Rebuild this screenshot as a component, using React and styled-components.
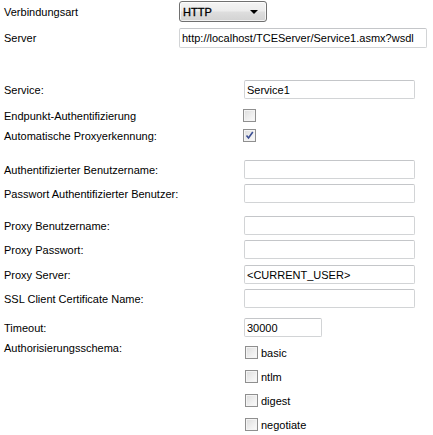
import React from "react";
import styled, { createGlobalStyle } from "styled-components";

const Global = createGlobalStyle`
  html, body { margin: 0; padding: 0; background: #ffffff; }
  body {
    font-family: "Liberation Sans", Arial, sans-serif;
    font-size: 11px;
    color: #000;
  }
`;

const Page = styled.div`
  width: 433px;
  height: 435px;
  padding-top: 1px;
  box-sizing: border-box;
  overflow: hidden;
`;

const Section = styled.div`
  display: flex;
  flex-direction: column;
  margin-top: ${(p) => p.$top || 0}px;
`;

const Row = styled.div`
  display: grid;
  grid-template-columns: ${(p) => p.$labelWidth}px 1fr;
  align-items: ${(p) => (p.$alignTop ? "start" : "center")};
  min-height: ${(p) => p.$height || 19}px;
  margin-top: ${(p) => p.$gap || 0}px;
`;

const Label = styled.div`
  padding-left: 4px;
  line-height: 14px;
  white-space: nowrap;
`;

const TextBox = styled.div`
  box-sizing: border-box;
  width: ${(p) => p.$width}px;
  height: ${(p) => p.$height || 19}px;
  border: 1px solid #d2d4d6;
  border-top-color: #c4c6c9;
  border-radius: 2px;
  background: #fff;
  padding: 0 2px;
  display: flex;
  align-items: center;
  white-space: nowrap;
  overflow: hidden;
  font-size: 11px;
`;

const Select = styled.div`
  box-sizing: border-box;
  width: 88px;
  height: 21px;
  border: 1px solid #707070;
  border-radius: 3px;
  background: linear-gradient(#f4f4f4 0%, #ececec 48%, #dedede 52%, #d2d2d2 100%);
  box-shadow: inset 0 0 0 1px rgba(255, 255, 255, 0.7);
  display: flex;
  align-items: center;
  justify-content: space-between;
  padding: 0 8px 0 3px;
  font-size: 11px;
  -webkit-text-stroke: 0.35px #000;
`;

const Arrow = styled.span`
  width: 0;
  height: 0;
  border-left: 4px solid transparent;
  border-right: 4px solid transparent;
  border-top: 4px solid #000;
`;

const Box = styled.span`
  box-sizing: border-box;
  display: inline-flex;
  align-items: center;
  justify-content: center;
  width: 13px;
  height: 13px;
  margin-left: ${(p) => p.$shift || 0}px;
  border: 1px solid #8f8f8f;
  background: linear-gradient(135deg, #dcdcdc 0%, #f0f0f0 60%, #fbfbfb 100%);
  box-shadow: inset 0 0 0 1px #f4f4f4;
  flex: none;
`;

const CheckList = styled.div`
  display: flex;
  flex-direction: column;
  gap: 5px;
  padding-top: 2px;
`;

const CheckItem = styled.label`
  display: flex;
  align-items: center;
  gap: 3px;
  height: 19px;
  padding-left: 1px;
  font-size: 11px;
`;

function Checkbox({ checked, shift }) {
  return (
    <Box $shift={shift}>
      {checked && (
        <svg width="9" height="9" viewBox="0 0 9 9">
          <path
            d="M1.5 4.5 L3.5 7 L7.8 1"
            fill="none"
            stroke="#3c4f94"
            strokeWidth="1.6"
          />
        </svg>
      )}
    </Box>
  );
}

const LW = 244;

export default function App() {
  return (
    <Page>
      <Global />
      <Section>
        <Row $labelWidth={179} $height={21}>
          <Label>Verbindungsart</Label>
          <Select>
            <span>HTTP</span>
            <Arrow />
          </Select>
        </Row>
        <Row $labelWidth={179} $height={20} $gap={6}>
          <Label>Server</Label>
          <TextBox $width={248} $height={20}>
            http://localhost/TCEServer/Service1.asmx?wsdl
          </TextBox>
        </Row>
      </Section>

      <Section $top={32}>
        <Row $labelWidth={LW}>
          <Label>Service:</Label>
          <TextBox $width={171}>Service1</TextBox>
        </Row>
        <Row $labelWidth={LW} $gap={7}>
          <Label>Endpunkt-Authentifizierung</Label>
          <Checkbox shift={-1} />
        </Row>
        <Row $labelWidth={LW} $gap={1}>
          <Label>Automatische Proxyerkennung:</Label>
          <Checkbox checked shift={-1} />
        </Row>

        <Row $labelWidth={LW} $gap={15}>
          <Label>Authentifizierter Benutzername:</Label>
          <TextBox $width={171} />
        </Row>
        <Row $labelWidth={LW} $gap={5}>
          <Label>Passwort Authentifizierter Benutzer:</Label>
          <TextBox $width={171} />
        </Row>

        <Row $labelWidth={LW} $gap={13}>
          <Label>Proxy Benutzername:</Label>
          <TextBox $width={171} />
        </Row>
        <Row $labelWidth={LW} $gap={5}>
          <Label>Proxy Passwort:</Label>
          <TextBox $width={171} />
        </Row>
        <Row $labelWidth={LW} $gap={6}>
          <Label>Proxy Server:</Label>
          <TextBox $width={171}>&lt;CURRENT_USER&gt;</TextBox>
        </Row>
        <Row $labelWidth={LW} $gap={5}>
          <Label>SSL Client Certificate Name:</Label>
          <TextBox $width={171} />
        </Row>

        <Row $labelWidth={LW} $gap={10}>
          <Label>Timeout:</Label>
          <TextBox $width={78}>30000</TextBox>
        </Row>
        <Row $labelWidth={LW} $gap={4} $alignTop>
          <Label>Authorisierungsschema:</Label>
          <CheckList>
            {["basic", "ntlm", "digest", "negotiate"].map((n) => (
              <CheckItem key={n}>
                <Checkbox />
                <span>{n}</span>
              </CheckItem>
            ))}
          </CheckList>
        </Row>
      </Section>
    </Page>
  );
}
